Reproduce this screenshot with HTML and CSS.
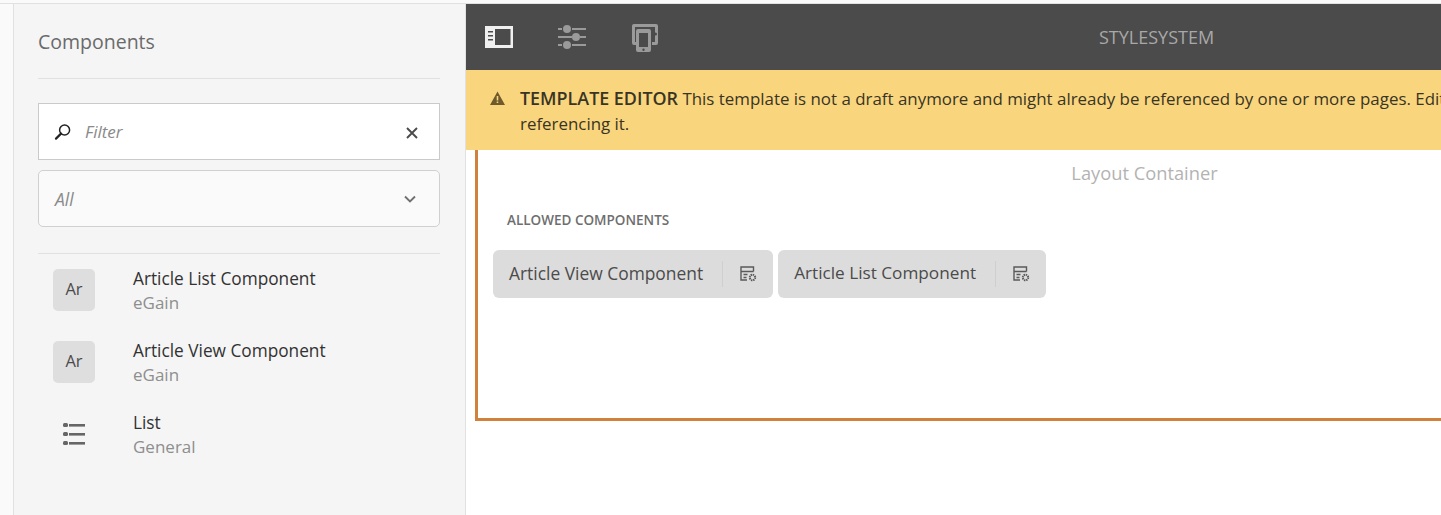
FILE: index.html
```html
<!DOCTYPE html>
<html lang="en">
<head>
<meta charset="utf-8">
<title>Template Editor</title>
<link rel="stylesheet" href="styles.css">
</head>
<body>
<div class="app">
  <div class="rail"></div>
  <aside class="panel">
    <h2 class="panel-title">Components</h2>
    <div class="search">
      <svg class="search-icon" width="18" height="18" viewBox="0 0 18 18"><circle cx="10.600" cy="7" r="5" fill="none" stroke="#222" stroke-width="1.500"/><path d="M7 10.600 2 15.600" stroke="#222" stroke-width="2.200" stroke-linecap="round"/></svg>
      <span class="search-text">Filter</span>
      <svg class="clear-icon" width="14" height="14" viewBox="0 0 14 14"><path d="M2 2l10 10M12 2 2 12" stroke="#4b4b4b" stroke-width="1.900"/></svg>
    </div>
    <div class="select">
      <span class="select-text">All</span>
      <svg width="14" height="10" viewBox="0 0 14 10"><path d="M2 2.500l5 5 5-5" fill="none" stroke="#707070" stroke-width="1.900"/></svg>
    </div>
    <ul class="list">
      <li class="item"><span class="badge">Ar</span><div><div class="name">Article List Component</div><div class="group">eGain</div></div></li>
      <li class="item"><span class="badge">Ar</span><div><div class="name">Article View Component</div><div class="group">eGain</div></div></li>
      <li class="item"><span class="badge plain"><svg width="24" height="24" viewBox="0 0 24 24" fill="#666"><rect x="1" y="1" width="5" height="4" rx="1.500"/><rect x="1" y="10" width="5" height="4" rx="1.500"/><rect x="1" y="19" width="5" height="4" rx="1.500"/><rect x="7" y="2" width="16" height="2.600"/><rect x="7" y="11" width="16" height="2.600"/><rect x="7" y="20" width="16" height="2.600"/></svg></span><div><div class="name">List</div><div class="group">General</div></div></li>
    </ul>
  </aside>
  <main class="main">
    <header class="toolbar">
      <svg class="tool first" width="28" height="22" viewBox="0 0 28 22"><path fill="#f0f0f0" d="M0 0h28v22H0z"/><path fill="#4b4b4b" d="M10 3h15.500v16H10zM3 5h5v1.500H3zM3 9h5v1.500H3zM3 13h5v1.500H3z"/></svg>
      <svg class="tool" width="28" height="24" viewBox="0 0 28 24" fill="#9a9a9a"><path d="M0 3h4v2H0zM14 3h14v2H14zM0 11h14v2H0zM22 11h6v2h-6zM0 19h4v2H0zM14 19h14v2H14z"/><circle cx="9" cy="4" r="4"/><circle cx="18" cy="12" r="4"/><circle cx="9" cy="20" r="4"/></svg>
      <svg class="tool" width="26" height="28" viewBox="0 0 26 28"><path fill="#9a9a9a" fill-rule="evenodd" d="M2 0h22a2 2 0 0 1 2 2v17a2 2 0 0 1-2 2h-4v-3h3V3H3v15h1v3H2a2 2 0 0 1-2-2V2a2 2 0 0 1 2-2z"/><path fill="#9a9a9a" fill-rule="evenodd" d="M6 5h11a2 2 0 0 1 2 2v19a2 2 0 0 1-2 2H6a2 2 0 0 1-2-2V7a2 2 0 0 1 2-2zm1 4v14h9V9zm4.500 15.500a1.200 1.200 0 1 0 0 2.400 1.200 1.200 0 0 0 0-2.400z"/><circle cx="23.500" cy="10" r="1.500" fill="#4b4b4b"/></svg>
      <span class="toolbar-title">STYLESYSTEM</span>
    </header>
    <div class="banner">
      <svg class="warn" width="15" height="14" viewBox="0 0 15 14"><path fill="#6f5a2c" fill-rule="evenodd" d="M7.500.5 15 14H0zM6.700 5v4.500h1.600V5zm0 5.500V12h1.600v-1.500z"/></svg>
      <p class="banner-text"><strong>TEMPLATE EDITOR</strong> This template is not a draft anymore and might already be referenced by one or more pages. Edit<br>referencing it.</p>
    </div>
    <section class="canvas">
      <div class="container">
        <div class="container-label">Layout Container</div>
        <div class="allowed">ALLOWED COMPONENTS</div>
        <div class="chips">
          <div class="chip"><span class="chip-name">Article View Component</span><svg class="chip-icon" width="17" height="16" viewBox="0 0 17 16" fill="none" stroke="#5a5a5a" stroke-width="1.400"><path d="M13.500 5.500V1H1v13h6M1 5.500h12.500M3.500 8.500h4M3.500 11.500h3"/><circle cx="12.500" cy="11.500" r="2.700" stroke-dasharray="1.400 .7" stroke-width="2"/></svg></div>
          <div class="chip"><span class="chip-name">Article List Component</span><svg class="chip-icon" width="17" height="16" viewBox="0 0 17 16" fill="none" stroke="#5a5a5a" stroke-width="1.400"><path d="M13.500 5.500V1H1v13h6M1 5.500h12.500M3.500 8.500h4M3.500 11.500h3"/><circle cx="12.500" cy="11.500" r="2.700" stroke-dasharray="1.400 .7" stroke-width="2"/></svg></div>
        </div>
      </div>
    </section>
  </main>
</div>
</body>
</html>
```

FILE: styles.css
```css
* { box-sizing: border-box; }
html, body { margin: 0; height: 100%; overflow: hidden; background: #fff; }
body { font-family: "Open Sans", "Noto Sans", sans-serif; color: #4b4b4b; }
.app { display: flex; height: 515px; padding-top: 4px; background: linear-gradient(#fafafa 3px, #e1e1e1 3px, #e1e1e1 4px, #fff 4px); }
.rail { width: 14px; flex: none; background: #fafafa; border-right: 1px solid #e1e1e1; }
.panel { width: 452px; flex: none; background: #f5f5f5; border-right: 1px solid #e1e1e1; padding: 23px 25px 0 24px; }
.panel-title { margin: 0; font-size: 19.500px; font-weight: 400; line-height: 30px; color: #6a6a6a; padding-bottom: 21px; border-bottom: 1px solid #e1e1e1; }
.search { margin-top: 24px; height: 57px; background: #fff; border: 1px solid #cacaca; display: flex; align-items: center; padding: 0 20px 0 15px; }
.search-icon { flex: none; }
.search-text { flex: 1; margin-left: 13px; font-size: 17px; font-style: italic; color: #8a8a8a; }
.clear-icon { flex: none; margin-top: 3px; }
.select { margin-top: 10px; height: 57px; background: #fafafa; border: 1px solid #d0d0d0; border-radius: 5px; display: flex; align-items: center; justify-content: space-between; padding: 0 22px 0 16px; }
.select-text { font-size: 17.500px; font-style: italic; color: #8a8a8a; }
.list { list-style: none; margin: 26px 0 0; padding: 15px 0 0 15px; border-top: 1px solid #e1e1e1; }
.item { display: flex; align-items: center; gap: 38px; height: 42px; margin-bottom: 30px; }
.badge { width: 42px; height: 42px; flex: none; border-radius: 5px; background: #dedede; display: flex; align-items: center; justify-content: center; font-size: 16.500px; line-height: 40px; padding-bottom: 2px; color: #4b4b4b; }
.badge.plain { background: none; padding-bottom: 0; }
.name { font-size: 17.250px; line-height: 26px; color: #323232; }
.group { font-size: 17px; line-height: 22px; color: #8e8e8e; }
.main { flex: 1; min-width: 0; overflow: hidden; display: flex; flex-direction: column; }
.toolbar { height: 66px; flex: none; background: #4b4b4b; display: flex; align-items: center; padding-left: 19px; }
.tool { flex: none; margin-right: 45px; }
.tool:nth-child(2) { margin-right: 46px; }
.tool:nth-child(3) { margin-right: 0; margin-top: 2px; }
.toolbar-title { font-size: 18px; color: #a8a8a8; margin-left: 441px; }
.banner { height: 80px; flex: none; background: #f9d67e; display: flex; padding: 16px 0 0 24px; color: #3a3424; }
.warn { flex: none; margin-top: 5px; }
.banner-text { margin: 0 0 0 15px; font-size: 16.900px; line-height: 25px; white-space: nowrap; }
.banner-text strong { font-weight: 600; font-size: 17.900px; line-height: 20px; }
.canvas { flex: 1; padding: 0 0 0 9px; }
.container { width: 1336px; height: 271px; border-left: 3px solid #d0823c; border-bottom: 3px solid #d0823c; padding-top: 10px; }
.container-label { text-align: center; font-size: 18.300px; line-height: 26px; color: #b3b3b3; }
.allowed { margin: 26px 0 0 29px; font-size: 13.500px; line-height: 16px; font-weight: 600; color: #6e6e6e; }
.chips { display: flex; gap: 5px; margin: 22px 0 0 15px; }
.chip { height: 48px; background: #dcdcdc; border-radius: 6px; display: flex; align-items: center; padding: 0 16px; font-size: 17.400px; color: #4b4b4b; }
.chip + .chip { font-size: 17.200px; }
.chip-name { padding-right: 19px; height: 26px; line-height: 24px; border-right: 1px solid #cfcfcf; margin-right: 17px; }
.chip-icon { flex: none; }
```
